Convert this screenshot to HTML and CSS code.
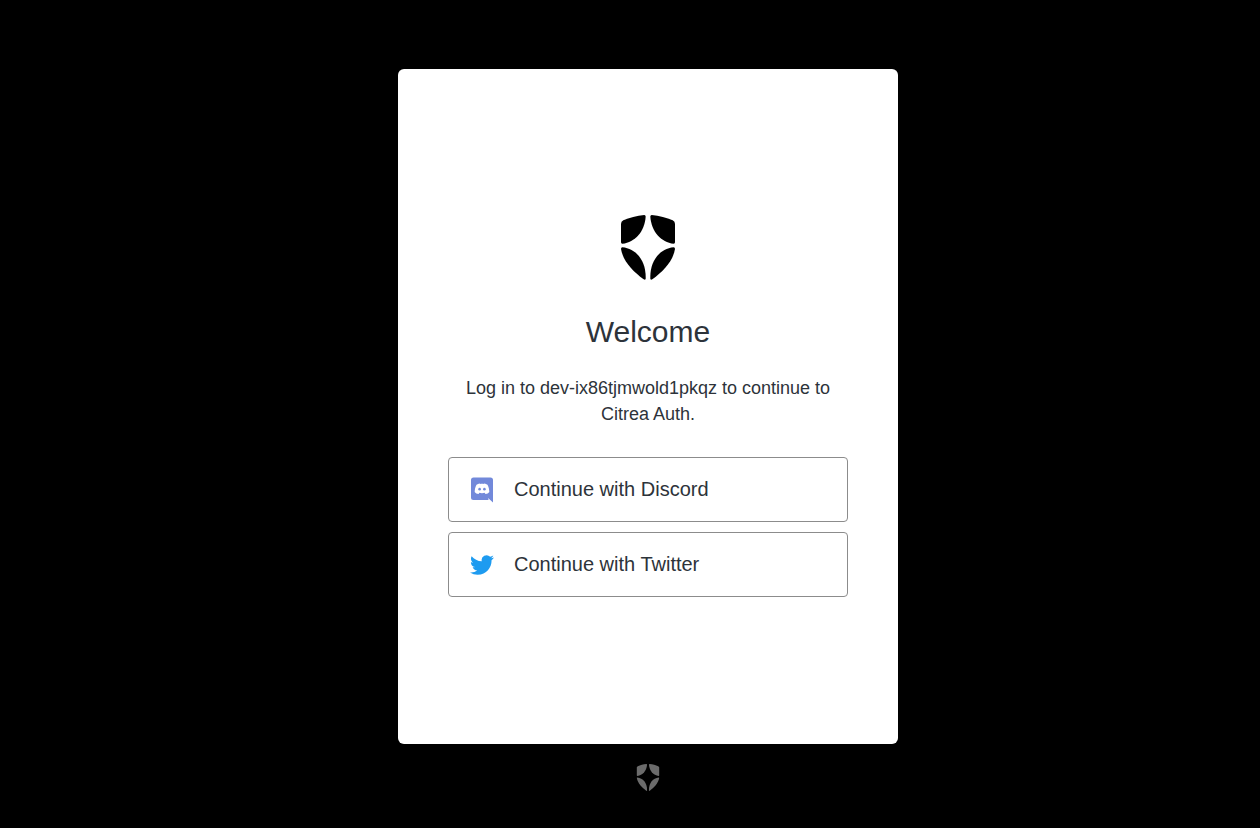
FILE: index.html
```html
<!DOCTYPE html>
<html lang="en">
  <head>
    <meta charset="utf-8">
    <meta name="viewport" content="width=device-width, initial-scale=1">
    <title>Log in | Citrea Auth</title>
    <link rel="stylesheet" href="styles.css">
  </head>

  <body>
    <svg class="symbols" aria-hidden="true">
      <symbol id="shield" viewBox="0 0 162 195">
        <path d="M70 0 C47 2 25 8 7 16 Q0 20 0 27 V82 Q0 86 4 86 C42 82 71 49 74 5 Q74 0 70 0 Z" />
        <path d="M92 0 C115 2 137 8 155 16 Q162 20 162 27 V82 Q162 86 158 86 C120 82 91 49 88 5 Q88 0 92 0 Z" />
        <path d="M4 97 C46 101 76 138 74 191 Q73 196 68 193 C35 169 6 138 0 102 Q0 97 4 97 Z" />
        <path d="M158 97 C116 101 86 138 88 191 Q89 196 94 193 C127 169 156 138 162 102 Q162 97 158 97 Z" />
      </symbol>
    </svg>

    <main class="card">
      <svg class="logo" role="img" aria-label="dev-ix86tjmwold1pkqz"><use href="#shield" /></svg>
      <h1 class="title">Welcome</h1>
      <p class="description">Log in to dev-ix86tjmwold1pkqz to continue to Citrea Auth.</p>

      <form class="login-form">
        <button type="submit" class="button" name="connection" value="discord">
          <span class="button-icon">
            <svg class="discord-icon" viewBox="0 0 22 26" aria-hidden="true">
              <path fill="#7289da" d="M2.5 0.5h17A2.5 2.5 0 0 1 22 3v22.5l-5-4.5 0.6 2H2.5A2.5 2.5 0 0 1 0 20.5V3A2.5 2.5 0 0 1 2.5 0.5z" />
              <path fill="#fff" d="M9 6.4C7.4 6.6 6.2 7.2 5.5 7.8C4.3 10.2 3.7 12.6 3.7 15.1C4.6 16.4 5.9 17 7.5 17L8.4 15.8C10 16.3 12 16.3 13.6 15.8L14.5 17C16.1 17 17.4 16.4 18.3 15.1C18.3 12.6 17.7 10.2 16.5 7.8C15.8 7.2 14.6 6.6 13 6.4L12.6 7C11.5 6.8 10.5 6.8 9.4 7Z" />
              <ellipse fill="#7289da" cx="8.6" cy="12.2" rx="1.3" ry="1.4" />
              <ellipse fill="#7289da" cx="13.4" cy="12.2" rx="1.3" ry="1.4" />
            </svg>
          </span>
          Continue with Discord
        </button>
        <button type="submit" class="button" name="connection" value="twitter">
          <span class="button-icon">
            <svg class="twitter-icon" viewBox="0 0 24 24" aria-hidden="true">
              <path fill="#1d9bf0" d="M23.954 4.569a10 10 0 0 1-2.825.775 4.958 4.958 0 0 0 2.163-2.723c-.951.555-2.005.959-3.127 1.184a4.92 4.92 0 0 0-8.384 4.482C7.691 8.094 4.066 6.13 1.64 3.161a4.822 4.822 0 0 0-.666 2.475c0 1.71.87 3.213 2.188 4.096a4.904 4.904 0 0 1-2.228-.616v.061a4.923 4.923 0 0 0 3.946 4.827 4.996 4.996 0 0 1-2.212.085 4.937 4.937 0 0 0 4.604 3.417 9.868 9.868 0 0 1-6.102 2.105c-.39 0-.779-.023-1.17-.067a13.995 13.995 0 0 0 7.557 2.209c9.054 0 13.999-7.496 13.999-13.986 0-.209 0-.42-.015-.63a9.936 9.936 0 0 0 2.46-2.548l-.047-.02z" />
            </svg>
          </span>
          Continue with Twitter
        </button>
      </form>
    </main>

    <footer class="footer">
      <svg class="footer-logo" aria-hidden="true"><use href="#shield" /></svg>
    </footer>
  </body>
</html>
```

FILE: styles.css
```css
* {
  box-sizing: border-box;
}

body {
  display: flex;
  flex-direction: column;
  align-items: center;
  min-height: 100vh;
  margin: 0;
  padding: 69px 0 37px 36px;
  background-color: #000;
  color: #2d333a;
  font-family: "Liberation Sans", Arial, sans-serif;
}

.symbols {
  position: absolute;
  width: 0;
  height: 0;
}

.card {
  display: flex;
  flex: 1;
  flex-direction: column;
  align-items: center;
  justify-content: center;
  width: 100%;
  max-width: 500px;
  padding: 40px 50px 41px;
  border-radius: 6px;
  background-color: #fff;
}

.logo {
  width: 54px;
  height: 65px;
  fill: #000;
}

.title {
  margin: 34px 0 0;
  font-size: 30px;
  font-weight: 400;
  line-height: 36px;
}

.description {
  margin: 25px 0 30px;
  font-size: 18px;
  line-height: 26px;
  text-align: center;
}

.login-form {
  display: flex;
  flex-direction: column;
  gap: 10px;
  width: 100%;
}

.button {
  display: flex;
  align-items: center;
  gap: 19px;
  width: 100%;
  height: 65px;
  padding: 0 20px;
  border: 1px solid #8c8c8c;
  border-radius: 4px;
  background-color: #fff;
  color: #2d333a;
  font-family: inherit;
  font-size: 20px;
  text-align: left;
  cursor: pointer;
}

.button:hover {
  background-color: #f2f2f2;
}

.button-icon {
  display: flex;
  align-items: center;
  justify-content: center;
  width: 26px;
  height: 26px;
}

.discord-icon {
  width: 22px;
  height: 26px;
}

.twitter-icon {
  width: 24px;
  height: 24px;
}

.footer {
  display: flex;
  justify-content: center;
  padding-top: 20px;
}

.footer-logo {
  width: 24px;
  height: 27px;
  fill: #6b6b6b;
}
```
